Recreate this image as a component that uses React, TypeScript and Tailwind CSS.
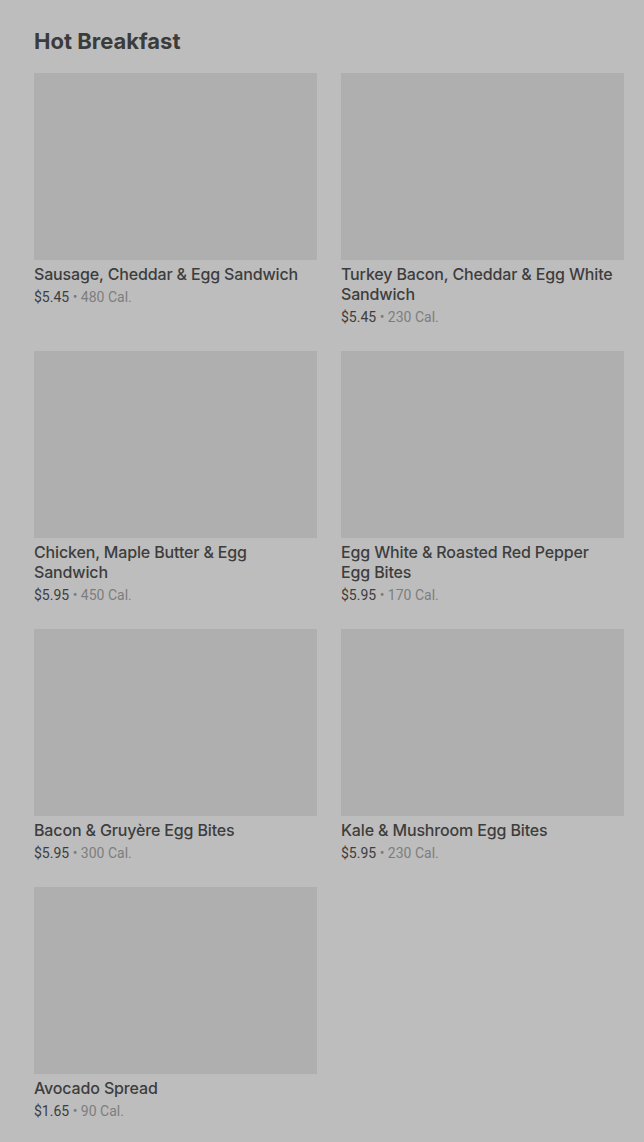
const items = [
  { name: "Sausage, Cheddar & Egg Sandwich", price: "$5.45", cal: "480 Cal." },
  { name: "Turkey Bacon, Cheddar & Egg White Sandwich", price: "$5.45", cal: "230 Cal." },
  { name: "Chicken, Maple Butter & Egg Sandwich", price: "$5.95", cal: "450 Cal." },
  { name: "Egg White & Roasted Red Pepper Egg Bites", price: "$5.95", cal: "170 Cal." },
  { name: "Bacon & Gruyère Egg Bites", price: "$5.95", cal: "300 Cal." },
  { name: "Kale & Mushroom Egg Bites", price: "$5.95", cal: "230 Cal." },
  { name: "Avocado Spread", price: "$1.65", cal: "90 Cal." },
];

const App = () => {
  return (
    <div className="min-h-[1142px] w-full bg-[#bdbdbd] pl-[34px] pr-[20px] pt-[27px] font-['Roboto','Liberation_Sans',sans-serif]">
      <h2 className="font-['Inter','Liberation_Sans',sans-serif] text-[22px] leading-[28px] font-bold text-[#3b3b3b]">
        Hot Breakfast
      </h2>
      <div className="mt-[18px] grid grid-cols-2 gap-x-[24px] gap-y-[24px]">
        {items.map((item) => (
          <div key={item.name} className="flex flex-col">
            <div className="h-[187px] w-full bg-[#afafaf]" />
            <div className="mt-[4px] pr-[6px] font-['Inter','Liberation_Sans',sans-serif] text-[16px] leading-[20px] font-medium tracking-[-0.15px] text-[#3d3d3d]">
              {item.name}
            </div>
            <div className="mt-[3px] text-[14px] leading-[20px] text-[#3d3d3d]">
              {item.price}
              <span className="text-[#7d7d7d]"> • {item.cal}</span>
            </div>
          </div>
        ))}
      </div>
    </div>
  );
};

export default App;
